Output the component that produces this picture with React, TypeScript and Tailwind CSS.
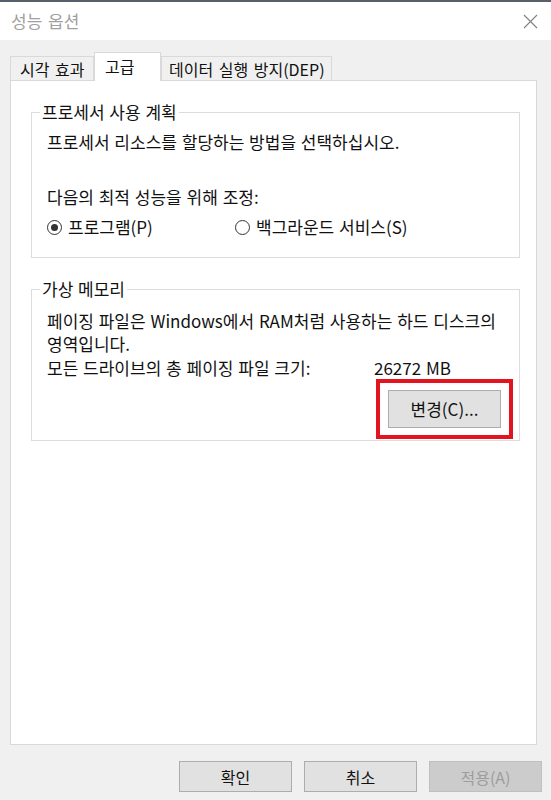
type RadioProps = { label: string; checked?: boolean; className?: string };

function Radio({ label, checked = false, className = '' }: RadioProps) {
  return (
    <label className={`flex items-center gap-[6px] ${className}`}>
      <span className="flex h-[15px] w-[15px] items-center justify-center rounded-full border border-[#333333] bg-white">
        {checked && <span className="h-[7px] w-[7px] rounded-full bg-[#333333]" />}
      </span>
      <span>{label}</span>
    </label>
  );
}

function DialogButton({ label, disabled = false }: { label: string; disabled?: boolean }) {
  return (
    <button
      type="button"
      disabled={disabled}
      className={
        disabled
          ? 'h-[31px] w-[113px] border border-[#bfbfbf] bg-[#cccccc] text-[#9d9d9d]'
          : 'h-[31px] w-[113px] border border-[#adadad] bg-[#e1e1e1] text-[#111111]'
      }
    >
      {label}
    </button>
  );
}

export default function App() {
  return (
    <div className="flex h-[800px] w-[551px] flex-col bg-[#f0f0f0] font-['Noto_Sans_CJK_KR','Noto_Sans',sans-serif] text-[16px] leading-[22px] text-[#111111] [word-spacing:2px]">
      {/* title bar */}
      <div className="flex h-[40px] items-center justify-between border-t-2 border-[#56606b] bg-white pl-[11px] pr-[13px]">
        <span className="text-[17px] text-[#a0a0a0]">성능 옵션</span>
        <svg width="15" height="15" viewBox="0 0 15 15" className="text-[#808080]">
          <path d="M1 1L14 14M14 1L1 14" stroke="currentColor" strokeWidth="1.1" />
        </svg>
      </div>

      {/* tabs */}
      <div className="ml-[10px] mt-[12px] flex h-[28px] items-end">
        <div className="flex h-[24px] w-[84px] items-center border border-b-0 border-[#d9d9d9] bg-[#f0f0f0] pl-[9px]">
          시각 효과
        </div>
        <div className="relative z-10 -mb-px flex h-[29px] w-[67px] items-start border border-b-0 border-[#d9d9d9] bg-white pl-[10px] pt-[2px]">
          고급
        </div>
        <div className="flex h-[24px] w-[171px] items-center border border-b-0 border-[#d9d9d9] bg-[#f0f0f0] pl-[7px]">
          데이터 실행 방지(DEP)
        </div>
      </div>

      {/* tab panel */}
      <div className="ml-[10px] flex h-[665px] w-[527px] flex-col border border-[#d9d9d9] bg-white pl-[20px] pr-[16px] pt-[20px] text-[17px] [word-spacing:1px]">
        <fieldset className="border border-[#dcdcdc] px-0 pb-[19px]">
          <legend className="ml-[8px] px-[2px]">프로세서 사용 계획</legend>
          <div className="pl-[15px] pt-[8px]">
            <p>프로세서 리소스를 할당하는 방법을 선택하십시오.</p>
            <p className="mt-[33px]">다음의 최적 성능을 위해 조정:</p>
            <div className="mt-[8px] flex">
              <Radio label="프로그램(P)" checked className="w-[188px]" />
              <Radio label="백그라운드 서비스(S)" />
            </div>
          </div>
        </fieldset>

        <fieldset className="mt-[20px] border border-[#dcdcdc] px-0 pb-[1px]">
          <legend className="ml-[8px] px-[2px]">가상 메모리</legend>
          <div className="pl-[15px] pt-[9px]">
            <p className="leading-[23px]">
              페이징 파일은 Windows에서 RAM처럼 사용하는 하드 디스크의
              <br />
              영역입니다.
            </p>
            <div className="mt-[2px] flex">
              <span className="w-[327px]">모든 드라이브의 총 페이징 파일 크기:</span>
              <span>26272 MB</span>
            </div>
            <div className="flex justify-end pr-[6px]">
              <div className="border-4 border-[#e3141f] px-[8px] py-[7px]">
                <button
                  type="button"
                  className="h-[38px] w-[113px] border border-[#adadad] bg-[#e1e1e1] text-[#111111]"
                >
                  변경(C)...
                </button>
              </div>
            </div>
          </div>
        </fieldset>
      </div>

      {/* dialog buttons */}
      <div className="mt-[16px] flex justify-end gap-[12px] pr-[9px]">
        <DialogButton label="확인" />
        <DialogButton label="취소" />
        <DialogButton label="적용(A)" disabled />
      </div>
    </div>
  );
}
